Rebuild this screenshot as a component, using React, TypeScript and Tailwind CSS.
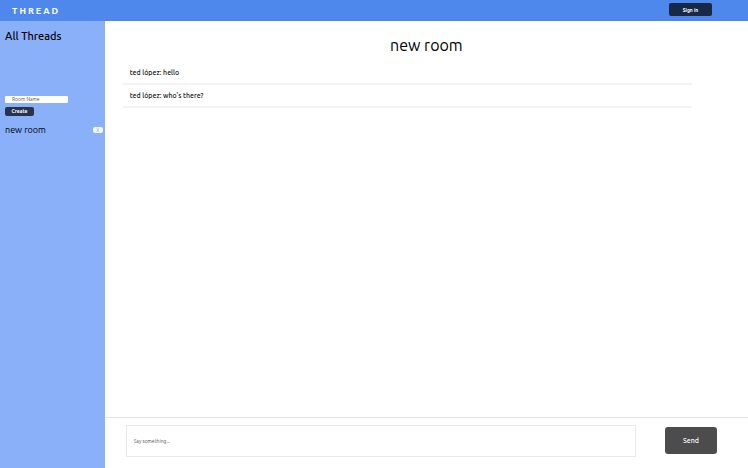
import { useState } from "react";

type Message = { author: string; text: string };

const messages: Message[] = [
  { author: "ted lópez", text: "hello" },
  { author: "ted lópez", text: "who's there?" },
];

function Header() {
  return (
    <header className="flex h-[21px] shrink-0 items-center justify-between bg-[#4f88ed] pr-9 pl-3">
      <span className="text-[9px] leading-3 font-bold tracking-[2px] text-white">THREAD</span>
      <button type="button" className="mb-[2px] h-[13px] w-[43px] rounded-[2px] bg-[#182848] text-[5px] leading-3 font-bold text-white">
        Sign in
      </button>
    </header>
  );
}

function Sidebar() {
  const [name, setName] = useState("");
  return (
    <aside className="w-[14%] shrink-0 bg-[#8ab0fa] pr-[2px] pl-[5px]">
      <h2 className="pt-2 text-[11px] leading-[14px] font-medium text-black">All Threads</h2>
      <form className="mt-[53px] flex flex-col items-start gap-1" onSubmit={(e) => e.preventDefault()}>
        <input
          type="text"
          aria-label="Room Name"
          placeholder="Room Name"
          value={name}
          onChange={(e) => setName(e.target.value)}
          className="h-[7px] w-[63px] rounded-[1px] bg-white px-[7px] text-[5px] leading-[7px] text-[#333] placeholder:text-[#555]"
        />
        <button type="submit" className="h-[9px] w-[29px] rounded-[2px] bg-[#28344f] text-[5px] leading-[9px] font-bold text-white">
          Create
        </button>
      </form>
      <ul className="mt-[7px]">
        <li className="flex items-center justify-between">
          <a href="#new-room" className="text-[9px] leading-[14px] text-black">new room</a>
          <button type="button" aria-label="Delete room" className="h-[6px] w-[10px] rounded-[2px] bg-[#f4f6fa] text-[5px] leading-[6px] text-[#aaa]">
            X
          </button>
        </li>
      </ul>
    </aside>
  );
}

export default function App() {
  const [draft, setDraft] = useState("");
  return (
    <div className="flex h-screen flex-col bg-white font-['Ubuntu','Noto_Sans',sans-serif]">
      <Header />
      <div className="flex min-h-0 flex-1">
        <Sidebar />
        <main className="flex min-w-0 flex-1 flex-col">
          <section className="flex-1">
            <h1 className="pt-3 text-center text-[16px] leading-6 text-black">new room</h1>
            <ul className="mt-[5px] mr-14 ml-[18px]">
              {messages.map((message) => (
                <li key={message.text} className="border-b-2 border-[#f3f3f3] pt-1 pb-[5px] pl-[7px] text-[7px] leading-3 font-medium text-[#111]">
                  {message.author}: {message.text}
                </li>
              ))}
            </ul>
          </section>
          <form className="flex h-[51px] shrink-0 items-center border-t border-[#e5e5e5] pr-[31px] pb-[5px] pl-[21px]" onSubmit={(e) => e.preventDefault()}>
            <input
              type="text"
              aria-label="Message"
              placeholder="Say something..."
              value={draft}
              onChange={(e) => setDraft(e.target.value)}
              className="h-8 min-w-0 flex-1 border border-[#e9e9e9] px-[7px] text-[5px] text-[#333] placeholder:text-[#555]"
            />
            <button type="submit" className="ml-[29px] h-[27px] w-[52px] rounded-[3px] bg-[#4c4c4c] text-[7px] font-medium text-white">
              Send
            </button>
          </form>
        </main>
      </div>
    </div>
  );
}
